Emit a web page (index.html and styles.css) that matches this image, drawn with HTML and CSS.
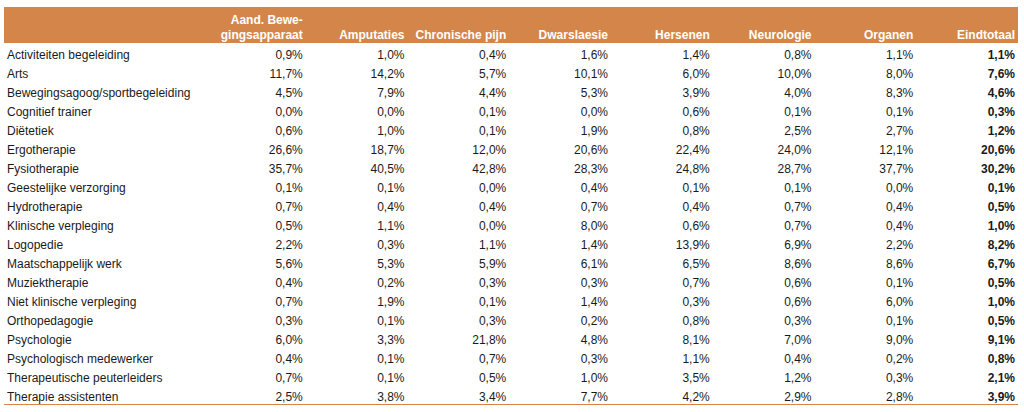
FILE: index.html
```html
<!DOCTYPE html>
<html lang="nl">
<head>
<meta charset="utf-8">
<link rel="stylesheet" href="styles.css">
</head>
<body>
<table class="tbl">
<colgroup><col class="c-label"><col span="8" class="c-num"></colgroup>
<thead>
<tr>
<th class="lbl"></th>
<th>Aand. Bewe-<br>gingsapparaat</th>
<th>Amputaties</th>
<th>Chronische pijn</th>
<th>Dwarslaesie</th>
<th>Hersenen</th>
<th>Neurologie</th>
<th>Organen</th>
<th>Eindtotaal</th>
</tr>
</thead>
<tbody>
<tr><td>Activiteiten begeleiding</td><td>0,9%</td><td>1,0%</td><td>0,4%</td><td>1,6%</td><td>1,4%</td><td>0,8%</td><td>1,1%</td><td class="tot">1,1%</td></tr>
<tr><td>Arts</td><td>11,7%</td><td>14,2%</td><td>5,7%</td><td>10,1%</td><td>6,0%</td><td>10,0%</td><td>8,0%</td><td class="tot">7,6%</td></tr>
<tr><td>Bewegingsagoog/sportbegeleiding</td><td>4,5%</td><td>7,9%</td><td>4,4%</td><td>5,3%</td><td>3,9%</td><td>4,0%</td><td>8,3%</td><td class="tot">4,6%</td></tr>
<tr><td>Cognitief trainer</td><td>0,0%</td><td>0,0%</td><td>0,1%</td><td>0,0%</td><td>0,6%</td><td>0,1%</td><td>0,1%</td><td class="tot">0,3%</td></tr>
<tr><td>Diëtetiek</td><td>0,6%</td><td>1,0%</td><td>0,1%</td><td>1,9%</td><td>0,8%</td><td>2,5%</td><td>2,7%</td><td class="tot">1,2%</td></tr>
<tr><td>Ergotherapie</td><td>26,6%</td><td>18,7%</td><td>12,0%</td><td>20,6%</td><td>22,4%</td><td>24,0%</td><td>12,1%</td><td class="tot">20,6%</td></tr>
<tr><td>Fysiotherapie</td><td>35,7%</td><td>40,5%</td><td>42,8%</td><td>28,3%</td><td>24,8%</td><td>28,7%</td><td>37,7%</td><td class="tot">30,2%</td></tr>
<tr><td>Geestelijke verzorging</td><td>0,1%</td><td>0,1%</td><td>0,0%</td><td>0,4%</td><td>0,1%</td><td>0,1%</td><td>0,0%</td><td class="tot">0,1%</td></tr>
<tr><td>Hydrotherapie</td><td>0,7%</td><td>0,4%</td><td>0,4%</td><td>0,7%</td><td>0,4%</td><td>0,7%</td><td>0,4%</td><td class="tot">0,5%</td></tr>
<tr><td>Klinische verpleging</td><td>0,5%</td><td>1,1%</td><td>0,0%</td><td>8,0%</td><td>0,6%</td><td>0,7%</td><td>0,4%</td><td class="tot">1,0%</td></tr>
<tr><td>Logopedie</td><td>2,2%</td><td>0,3%</td><td>1,1%</td><td>1,4%</td><td>13,9%</td><td>6,9%</td><td>2,2%</td><td class="tot">8,2%</td></tr>
<tr><td>Maatschappelijk werk</td><td>5,6%</td><td>5,3%</td><td>5,9%</td><td>6,1%</td><td>6,5%</td><td>8,6%</td><td>8,6%</td><td class="tot">6,7%</td></tr>
<tr><td>Muziektherapie</td><td>0,4%</td><td>0,2%</td><td>0,3%</td><td>0,3%</td><td>0,7%</td><td>0,6%</td><td>0,1%</td><td class="tot">0,5%</td></tr>
<tr><td>Niet klinische verpleging</td><td>0,7%</td><td>1,9%</td><td>0,1%</td><td>1,4%</td><td>0,3%</td><td>0,6%</td><td>6,0%</td><td class="tot">1,0%</td></tr>
<tr><td>Orthopedagogie</td><td>0,3%</td><td>0,1%</td><td>0,3%</td><td>0,2%</td><td>0,8%</td><td>0,3%</td><td>0,1%</td><td class="tot">0,5%</td></tr>
<tr><td>Psychologie</td><td>6,0%</td><td>3,3%</td><td>21,8%</td><td>4,8%</td><td>8,1%</td><td>7,0%</td><td>9,0%</td><td class="tot">9,1%</td></tr>
<tr><td>Psychologisch medewerker</td><td>0,4%</td><td>0,1%</td><td>0,7%</td><td>0,3%</td><td>1,1%</td><td>0,4%</td><td>0,2%</td><td class="tot">0,8%</td></tr>
<tr><td>Therapeutische peuterleiders</td><td>0,7%</td><td>0,1%</td><td>0,5%</td><td>1,0%</td><td>3,5%</td><td>1,2%</td><td>0,3%</td><td class="tot">2,1%</td></tr>
<tr><td>Therapie assistenten</td><td>2,5%</td><td>3,8%</td><td>3,4%</td><td>7,7%</td><td>4,2%</td><td>2,9%</td><td>2,8%</td><td class="tot">3,9%</td></tr>
</tbody>
</table>
</body>
</html>
```

FILE: styles.css
```css
html, body {
  margin: 0;
  padding: 0;
  background: #ffffff;
}
body {
  padding: 7px 0 0 4px;
  font-family: "Liberation Sans", Arial, sans-serif;
  font-size: 12px;
  color: #1a1a1a;
}
.tbl {
  border-collapse: collapse;
  table-layout: fixed;
  width: 1014px;
  border-bottom: 1px solid #d4864a;
}
.c-label { width: 200px; }
.c-num { width: 101.75px; }
.tbl thead tr {
  background: #d4864a;
}
.tbl th {
  box-sizing: border-box;
  height: 36px;
  color: #ffffff;
  font-weight: bold;
  text-align: right;
  vertical-align: bottom;
  line-height: 15px;
  padding: 0 3px 0 0;
  white-space: nowrap;
}
.tbl td {
  box-sizing: border-box;
  height: 19px;
  line-height: 14px;
  padding: 5px 3px 0 0;
  text-align: right;
  vertical-align: top;
  white-space: nowrap;
}
.tbl td:first-child {
  text-align: left;
  padding: 5px 0 0 3px;
}
.tbl td.tot {
  font-weight: bold;
}
```
